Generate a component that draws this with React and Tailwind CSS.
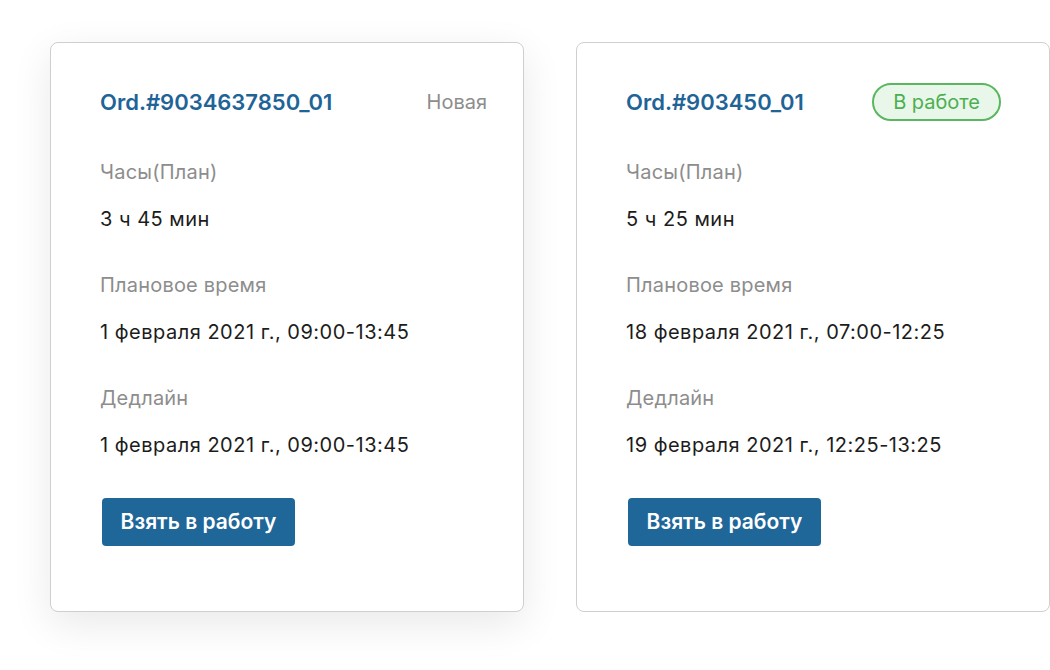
import React from "react";

const font = { fontFamily: "Inter, 'Noto Sans', sans-serif" };

function Field({ label, value, first }) {
  return (
    <div className={first ? "mt-[39px]" : "mt-[42px]"}>
      <div className="text-[20px] leading-[24px] tracking-[0.2px] text-[#8d8d8d]">{label}</div>
      <div className="mt-[23px] text-[20px] leading-[24px] tracking-[0.5px] text-[#1c1c1c]">{value}</div>
    </div>
  );
}

function Card({ id, status, hours, planned, deadline, shadow }) {
  return (
    <div
      className={
        "w-[474px] h-[570px] bg-white border border-[#cfcfcf] rounded-[8px] pl-[49px] pr-[36px] pt-[40px] flex flex-col " +
        (shadow ? "shadow-[0_12px_40px_rgba(0,0,0,0.09)]" : "")
      }
    >
      <div className="h-[38px] flex items-center justify-between">
        <div className="text-[22px] leading-[28px] font-semibold text-[#1f6497]">{id}</div>
        {status}
      </div>
      <Field first label="Часы(План)" value={hours} />
      <Field label="Плановое время" value={planned} />
      <Field label="Дедлайн" value={deadline} />
      <button className="mt-[41px] ml-[2px] w-[193px] h-[48px] bg-[#1f6699] rounded-[4px] text-white text-[21px] font-semibold self-start">
        Взять в работу
      </button>
    </div>
  );
}

export default function App() {
  return (
    <div className="w-[1050px] h-[670px] bg-white pt-[42px] pl-[50px] flex gap-[52px]" style={font}>
      <Card
        shadow
        id="Ord.#9034637850_01"
        status={<div className="text-[20px] text-[#8d8d8d]">Новая</div>}
        hours="3 ч 45 мин"
        planned="1 февраля 2021 г., 09:00-13:45"
        deadline="1 февраля 2021 г., 09:00-13:45"
      />
      <div className="[&>div]:pr-[48px]">
        <Card
          id="Ord.#903450_01"
          status={
            <div className="h-[38px] px-[19px] flex items-center rounded-full border-2 border-[#5ab75f] bg-[#e9f7ea] text-[20px] text-[#4caf50]">
              В работе
            </div>
          }
          hours="5 ч 25 мин"
          planned="18 февраля 2021 г., 07:00-12:25"
          deadline="19 февраля 2021 г., 12:25-13:25"
        />
      </div>
    </div>
  );
}
